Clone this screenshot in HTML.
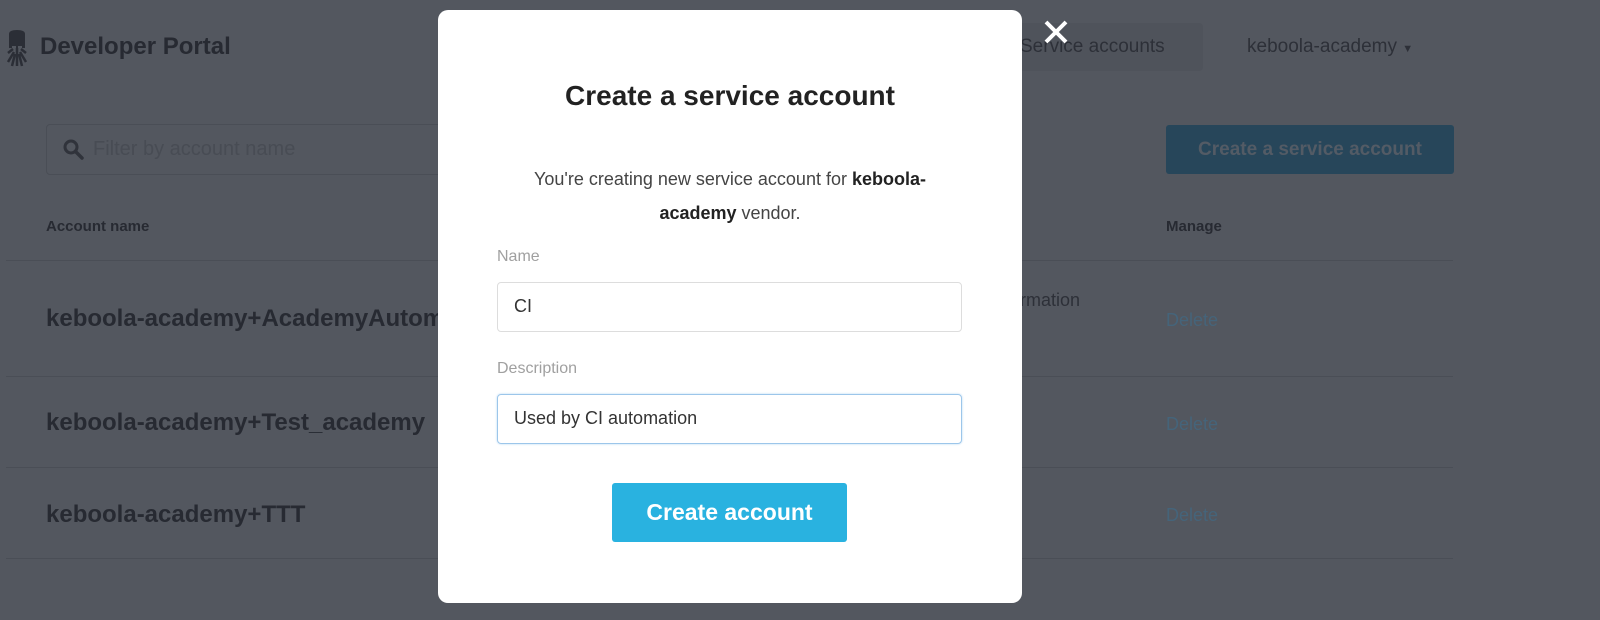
<!DOCTYPE html>
<html><head><meta charset="utf-8"><style>
*{margin:0;padding:0;box-sizing:border-box}
body{width:1600px;height:620px;background:#53575f;font-family:"Liberation Sans",Arial,sans-serif;position:relative;overflow:hidden;color:#2a2d35}
.a{position:absolute;white-space:nowrap}
.line{position:absolute;left:6px;width:1447px;height:1px;background:#4a4e56}
.row{font-size:24px;font-weight:bold;color:#272a32}
.del{font-size:18px;color:#45647a}
.modal{position:absolute;left:438px;top:10px;width:584px;height:593px;background:#fff;border-radius:10px}
.lbl{position:absolute;left:59px;font-size:16px;color:#a0a0a0}
.inp{position:absolute;left:59px;width:465px;height:50px;border:1px solid #ddd;border-radius:4px;font-size:18px;color:#333;padding:13px 16px}
</style></head><body>
<svg class="a" style="left:5px;top:30px" width="24" height="38" viewBox="0 0 24 38"><path d="M4 4 Q4 0 12 0 Q20 0 20 4 L20 18 L4 18 Z" fill="#2b2e36"/><rect x="7" y="16" width="4" height="3" fill="#53575f"/><rect x="13" y="16" width="4" height="3" fill="#53575f"/><g stroke="#2b2e36" stroke-width="2.5" fill="none"><path d="M12 18 L12 36M8 19 L3 23M16 19 L21 23M9 22 L3 32M15 22 L21 32M10 24 L7 36M14 24 L17 36"/></g></svg>
<div class="a" style="left:40px;top:33px;font-size:24px;font-weight:bold;color:#272a32">Developer Portal</div>
<div class="a" style="left:1010px;top:23px;width:193px;height:48px;background:#4f535b;border-radius:4px"></div>
<div class="a" style="left:1020px;top:36px;font-size:19px;color:#2d3038">Service accounts</div>
<div class="a" style="left:1247px;top:36px;font-size:19px;color:#2d3038">keboola-academy <span style="font-size:11px">▼</span></div>
<div class="a" style="left:46px;top:124px;width:420px;height:51px;border:1px solid #4a4e56;border-radius:4px"></div>
<svg class="a" style="left:63px;top:139px" width="22" height="22" viewBox="0 0 22 22"><circle cx="8" cy="8" r="6" stroke="#30333b" stroke-width="3" fill="none"/><path d="M12.5 12.5 L19 19" stroke="#30333b" stroke-width="3.5" stroke-linecap="round"/></svg>
<div class="a" style="left:93px;top:138px;font-size:20px;color:#484c54">Filter by account name</div>
<div class="a" style="left:1166px;top:125px;width:288px;height:49px;background:#27465a;border-radius:3px;color:#535b65;font-size:19px;font-weight:bold;text-align:center;line-height:49px">Create a service account</div>
<div class="a" style="left:46px;top:218px;font-size:15px;font-weight:bold;color:#272a32">Account name</div>
<div class="a" style="left:1166px;top:218px;font-size:15px;font-weight:bold;color:#272a32">Manage</div>
<div class="line" style="top:260px"></div>
<div class="line" style="top:376px"></div>
<div class="line" style="top:467px"></div>
<div class="line" style="top:558px"></div>
<div class="a row" style="left:46px;top:305px">keboola-academy+AcademyAutomation</div>
<div class="a row" style="left:46px;top:409px">keboola-academy+Test_academy</div>
<div class="a row" style="left:46px;top:501px">keboola-academy+TTT</div>
<div class="a" style="left:1010px;top:290px;font-size:18px;color:#2d3038">ormation</div>
<div class="a del" style="left:1166px;top:310px">Delete</div>
<div class="a del" style="left:1166px;top:414px">Delete</div>
<div class="a del" style="left:1166px;top:505px">Delete</div>
<svg class="a" style="left:1043px;top:19px" width="26" height="26" viewBox="0 0 26 26"><path d="M3 3 L23 23 M23 3 L3 23" stroke="#fff" stroke-width="4"/></svg>
<div class="modal">
<div class="a" style="left:0;width:584px;text-align:center;top:70px;font-size:28px;font-weight:bold;color:#222">Create a service account</div>
<div class="a" style="left:0;width:584px;text-align:center;top:152px;font-size:18px;line-height:34px;color:#444;white-space:normal">You're creating new service account for <b style="color:#222">keboola-<br>academy</b> vendor.</div>
<div class="lbl" style="top:238px">Name</div>
<div class="inp" style="top:272px">CI</div>
<div class="lbl" style="top:350px">Description</div>
<div class="inp" style="top:384px;border-color:#9cc6ea;box-shadow:0 0 2px #b5d6f2">Used by CI automation</div>
<div class="a" style="left:174px;top:473px;width:235px;height:59px;background:#29b2e0;border-radius:3px;color:#fff;font-size:23px;font-weight:bold;text-align:center;line-height:59px">Create account</div>
</div>
</body></html>
